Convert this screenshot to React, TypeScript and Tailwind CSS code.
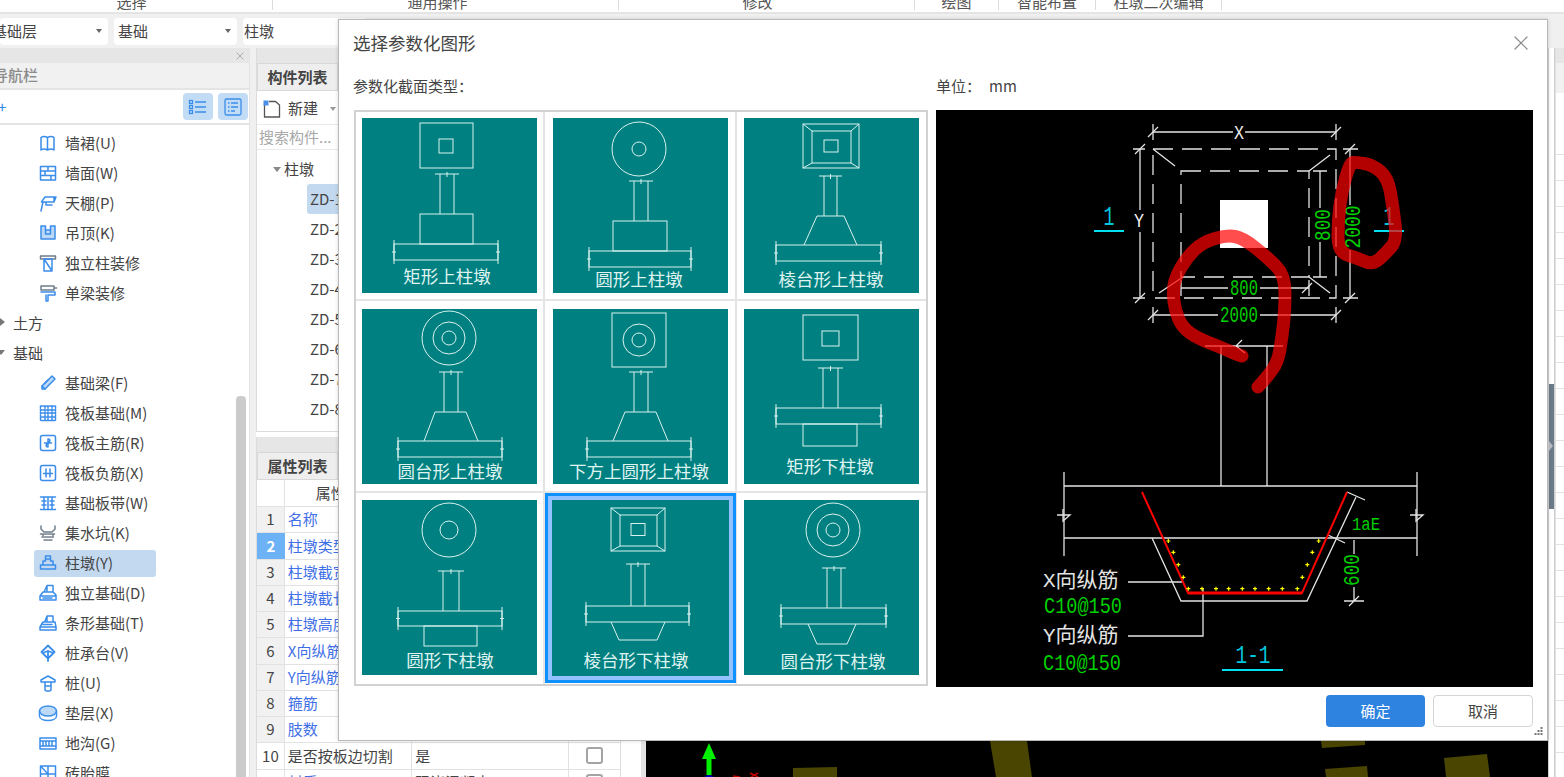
import React from "react";
import { X } from "lucide-react";

type Pt = [number, number];

// ---------- teal section tiles ----------
const L = ({ a, b, c, d }: { a: number; b: number; c: number; d: number }) => (
  <line x1={a} y1={b} x2={c} y2={d} />
);

const Sq = ({ a, b, c, d }: { a: number; b: number; c: number; d: number }) => (
  <rect x={a} y={b} width={c - a} height={d - b} />
);

const Plate = ({ x1, x2, y1, y2 }: { x1: number; x2: number; y1: number; y2: number }) => (
  <g>
    <rect x={x1} y={y1} width={x2 - x1} height={y2 - y1} />
    <L a={x1} b={y1 - 4} c={x1} d={y2 + 4} />
    <L a={x2} b={y1 - 4} c={x2} d={y2 + 4} />
    <L a={x1 - 2} b={(y1 + y2) / 2} c={x1 + 2} d={(y1 + y2) / 2} />
    <L a={x2 - 2} b={(y1 + y2) / 2} c={x2 + 2} d={(y1 + y2) / 2} />
  </g>
);

const Column = ({ x1, x2, y1, y2 }: { x1: number; x2: number; y1: number; y2: number }) => (
  <g>
    <L a={x1} b={y1} c={x1} d={y2} />
    <L a={x2} b={y1} c={x2} d={y2} />
    <L a={x1 - 5} b={y1} c={x2 + 5} d={y1} />
    <L a={(x1 + x2) / 2} b={y1 - 2} c={(x1 + x2) / 2} d={y1 + 3} />
  </g>
);

const Frustum = ({ x1, x2, y1, y2, i }: { x1: number; x2: number; y1: number; y2: number; i: number }) => (
  <g>
    <Sq a={x1} b={y1} c={x2} d={y2} />
    <Sq a={x1 + 9} b={y1 + 7} c={x2 - 8} d={y2 - 5} />
    <Sq a={(x1 + x2) / 2 - i} b={(y1 + y2) / 2 - i + 1} c={(x1 + x2) / 2 + i} d={(y1 + y2) / 2 + i - 1} />
    <L a={x1} b={y1} c={x1 + 9} d={y1 + 7} />
    <L a={x2} b={y1} c={x2 - 8} d={y1 + 7} />
    <L a={x1} b={y2} c={x1 + 9} d={y2 - 5} />
    <L a={x2} b={y2} c={x2 - 8} d={y2 - 5} />
  </g>
);

const Circles = ({ cx, cy, rs }: { cx: number; cy: number; rs: number[] }) => (
  <g>
    {rs.map((r) => (
      <circle key={r} cx={cx} cy={cy} r={r} />
    ))}
  </g>
);

const Trap = ({ a, b, c, d, y1, y2 }: { a: number; b: number; c: number; d: number; y1: number; y2: number }) => (
  <polyline points={`${a},${y2} ${b},${y1} ${c},${y1} ${d},${y2}`} />
);

const tiles: { label: string; lx: number; ly: number; draw: React.ReactNode }[] = [
  {
    label: "矩形上柱墩", lx: 85, ly: 159,
    draw: (
      <>
        <Sq a={58} b={5} c={111} d={50} />
        <Sq a={77} b={21} c={91} d={35} />
        <Column x1={78} x2={92} y1={56} y2={96} />
        <Sq a={58} b={96} c={111} d={126} />
        <Plate x1={32} x2={136} y1={126} y2={142} />
      </>
    ),
  },
  {
    label: "圆形上柱墩", lx: 86, ly: 162,
    draw: (
      <>
        <Circles cx={86} cy={31} rs={[27, 7]} />
        <Column x1={81} x2={95} y1={63} y2={103} />
        <Sq a={60} b={103} c={114} d={133} />
        <Plate x1={36} x2={138} y1={133} y2={149} />
      </>
    ),
  },
  {
    label: "棱台形上柱墩", lx: 87, ly: 162,
    draw: (
      <>
        <Frustum x1={59} x2={115} y1={6} y2={50} i={7} />
        <Column x1={80} x2={93} y1={58} y2={98} />
        <Trap a={60} b={73} c={100} d={113} y1={98} y2={127} />
        <Plate x1={32} x2={137} y1={127} y2={143} />
      </>
    ),
  },
  {
    label: "圆台形上柱墩", lx: 88, ly: 163,
    draw: (
      <>
        <Circles cx={87} cy={29} rs={[27, 16, 7]} />
        <Column x1={82} x2={96} y1={63} y2={103} />
        <Trap a={62} b={73} c={104} d={116} y1={103} y2={132} />
        <Plate x1={36} x2={140} y1={132} y2={148} />
      </>
    ),
  },
  {
    label: "下方上圆形上柱墩", lx: 86, ly: 163,
    draw: (
      <>
        <Sq a={59} b={4} c={113} d={58} />
        <Circles cx={86} cy={31} rs={[16, 7]} />
        <Column x1={81} x2={95} y1={63} y2={103} />
        <Trap a={60} b={72} c={103} d={115} y1={103} y2={132} />
        <Plate x1={34} x2={138} y1={132} y2={148} />
      </>
    ),
  },
  {
    label: "矩形下柱墩", lx: 86, ly: 158,
    draw: (
      <>
        <Sq a={59} b={6} c={114} d={51} />
        <Sq a={78} b={22} c={95} d={37} />
        <Column x1={79} x2={94} y1={59} y2={99} />
        <Plate x1={32} x2={137} y1={99} y2={115} />
        <Sq a={59} b={115} c={113} d={137} />
      </>
    ),
  },
  {
    label: "圆形下柱墩", lx: 88, ly: 161,
    draw: (
      <>
        <Circles cx={87} cy={30} rs={[27, 9]} />
        <Column x1={81} x2={97} y1={71} y2={111} />
        <Plate x1={36} x2={140} y1={111} y2={126} />
        <Sq a={62} b={126} c={115} d={146} />
      </>
    ),
  },
  {
    label: "棱台形下柱墩", lx: 83, ly: 161,
    draw: (
      <>
        <Frustum x1={58} x2={112} y1={8} y2={51} i={7} />
        <Column x1={78} x2={92} y1={64} y2={106} />
        <Plate x1={33} x2={136} y1={106} y2={122} />
        <Trap a={58} b={66} c={104} d={112} y1={140} y2={122} />
      </>
    ),
  },
  {
    label: "圆台形下柱墩", lx: 89, ly: 162,
    draw: (
      <>
        <Circles cx={89} cy={30} rs={[27, 16, 7]} />
        <Column x1={83} x2={97} y1={68} y2={108} />
        <Plate x1={37} x2={142} y1={108} y2={124} />
        <Trap a={64} b={73} c={103} d={112} y1={144} y2={124} />
      </>
    ),
  },
];

const colPad = ["pl-[6px]", "pl-[8px]", "pl-[7px]"];
const rowPad = ["pt-[6px]", "pt-[8px]", "pt-[7px]"];

const Tile = ({ label, lx, ly, draw }: { label: string; lx: number; ly: number; draw: React.ReactNode }) => (
  <svg viewBox="0 0 175 175" className="relative block h-[175px] w-[175px] bg-[#008080]">
    <g fill="none" stroke="#d9f2ef" strokeWidth="1">
      {draw}
    </g>
    <text x={lx} y={ly + 6} textAnchor="middle" fontSize="17.5" fill="#dff3f0">
      {label}
    </text>
  </svg>
);

// ---------- black preview ----------
const smooth = (p: Pt[], closed = false) => {
  const pts = closed ? [...p, p[0]] : p;
  let d = closed
    ? `M${(p[0][0] + p[p.length - 1][0]) / 2} ${(p[0][1] + p[p.length - 1][1]) / 2}`
    : `M${p[0][0]} ${p[0][1]}`;
  for (let i = 0; i < pts.length - 1; i++) {
    const mx = (pts[i][0] + pts[i + 1][0]) / 2;
    const my = (pts[i][1] + pts[i + 1][1]) / 2;
    d += ` Q${pts[i][0]} ${pts[i][1]} ${mx} ${my}`;
  }
  if (!closed) d += ` L${pts[pts.length - 1][0]} ${pts[pts.length - 1][1]}`;
  return d;
};

const ink1: Pt[] = [
  [1242, 356], [1236, 354], [1220, 347], [1197, 338], [1182, 327], [1175, 310], [1173, 293], [1175, 278],
  [1187, 257], [1203, 242], [1227, 235], [1243, 238], [1267, 257], [1285, 275], [1285, 310], [1282, 337],
  [1278, 362], [1267, 377], [1258, 387],
];
const ink2: Pt[] = [
  [1355, 162], [1373, 165], [1388, 178], [1393, 207], [1397, 240], [1387, 252], [1373, 265], [1357, 258],
  [1338, 252], [1338, 220], [1342, 190], [1350, 163],
];

const rebarDots: Pt[] = [
  [445, 423], [460, 457], [475, 494], [490, 532], [505, 566], [546, 566], [588, 566], [626, 566], [667, 566],
  [705, 566], [746, 566], [787, 566], [832, 566], [847, 532], [862, 494], [877, 457], [896, 423],
];

const DimTick = ({ x, y }: { x: number; y: number }) => <path d={`M${x - 5} ${y + 5} L${x + 5} ${y - 5}`} />;

const Preview = () => (
  <svg viewBox="936 110 597 577" className="block h-[577px] w-[597px] bg-black">
    <g fill="none" stroke="#e4e4e4" strokeWidth="1.3">
      {/* top dims */}
      <path d="M1153 132 H1233 M1245 132 H1336 M1153 124 V140 M1336 124 V140" />
      <DimTick x={1153} y={132} />
      <DimTick x={1336} y={132} />
      <path d="M1140 149 V210 M1140 232 V298 M1133 149 H1145 M1133 298 H1145" />
      <DimTick x={1140} y={149} />
      <DimTick x={1140} y={298} />
      {/* plan */}
      <rect x="1153" y="149" width="183" height="149" strokeDasharray="20 9" />
      <rect x="1181" y="171" width="128" height="106" strokeDasharray="20 9" />
      <path d="M1153 149 L1175 166 M1330 155 L1309 171 M1159 293 L1183 277 M1309 277 L1330 293" />
      <path d="M1320 171 V208 M1320 242 V277 M1313 171 H1327 M1313 277 H1327" />
      <path d="M1350 149 V205 M1350 250 V298 M1343 149 H1358 M1343 298 H1358" />
      <DimTick x={1350} y={149} />
      <DimTick x={1350} y={298} />
      <path d="M1181 288 H1228 M1260 288 H1309 M1181 280 V296 M1309 280 V296" />
      <DimTick x={1307} y={288} />
      <path d="M1153 315 H1218 M1260 315 H1336 M1153 307 V323 M1336 307 V323" />
      <DimTick x={1153} y={315} />
      <DimTick x={1336} y={315} />
      {/* column */}
      <path d="M1205 346 H1283 M1221 346 V486 M1267 346 V486 M1236 346 L1242 340 M1236 346 L1245 353" />
      {/* section */}
      <path d="M1064 486 H1417 M1064 538 H1417 M1064 472 V556 M1417 472 V556" />
      <path d="M1057 515 L1070 515 L1063 521 V509 M1410 515 L1423 515 L1416 521 V509" />
      <polyline points="1152,538 1181,601 1307,601 1356,497" />
      <path d="M1347 492 L1365 500 M1328 535 L1345 543 M1354 540 V554 M1354 587 V601 M1344 601 H1364 M1349 606 L1359 596" />
      <path d="M1128 582 H1182 M1128 636 H1203 V589" />
    </g>
    <rect x="1220" y="200" width="48" height="48" fill="#fff" />
    <polyline points="1142,492 1188,593 1302,593 1347,492" fill="none" stroke="#f00" strokeWidth="2" />
    <path d="M1188 593 H1302" stroke="#f00" strokeWidth="3" />
    {rebarDots.map(([x, y]) => (
      <path
        key={`${x}-${y}`}
        d={`M${1020 + x / 3 - 2} ${400 + y / 3} h4 M${1020 + x / 3} ${400 + y / 3 - 2} v4`}
        stroke="#ff0"
        strokeWidth="1.2"
      />
    ))}
    <path d="M1094 231 H1124 M1374 231 H1404 M1222 670 H1283" stroke="#00e0ee" strokeWidth="2" />
    <g className="font-['Liberation_Mono']">
      <text x="1239" y="139" textAnchor="middle" fontSize="21" textLength="10" lengthAdjust="spacingAndGlyphs" fill="#eee">X</text>
      <text x="1139" y="227" textAnchor="middle" fontSize="21" textLength="10" lengthAdjust="spacingAndGlyphs" fill="#eee">Y</text>
      <text x="1109" y="225" textAnchor="middle" fontSize="27" textLength="11" lengthAdjust="spacingAndGlyphs" fill="#00c4dc">1</text>
      <text x="1389" y="225" textAnchor="middle" fontSize="27" textLength="11" lengthAdjust="spacingAndGlyphs" fill="#00c4dc">1</text>
      <g fill="#00d000" fontSize="22">
        <text x="1244" y="295" textAnchor="middle" textLength="28" lengthAdjust="spacingAndGlyphs">800</text>
        <text x="1239" y="322" textAnchor="middle" textLength="38" lengthAdjust="spacingAndGlyphs">2000</text>
        <text x="1330" y="225" textAnchor="middle" textLength="32" lengthAdjust="spacingAndGlyphs" transform="rotate(-90 1330 225)">800</text>
        <text x="1360" y="227" textAnchor="middle" textLength="43" lengthAdjust="spacingAndGlyphs" transform="rotate(-90 1360 227)">2000</text>
        <text x="1359" y="570" textAnchor="middle" textLength="32" lengthAdjust="spacingAndGlyphs" transform="rotate(-90 1359 570)">600</text>
        <text x="1044" y="613" textLength="78" lengthAdjust="spacingAndGlyphs">C10@150</text>
        <text x="1043" y="670" textLength="78" lengthAdjust="spacingAndGlyphs">C10@150</text>
      </g>
      <text x="1352" y="530" fontSize="18" textLength="28" lengthAdjust="spacingAndGlyphs" fill="#00d000">1aE</text>
      <text x="1253" y="663" textAnchor="middle" fontSize="25" textLength="35" lengthAdjust="spacingAndGlyphs" fill="#00c4dc">1-1</text>
      <text x="1043" y="587" fontSize="21" fill="#e4e4e4">X<tspan className="font-['Noto_Sans_CJK_SC']">向纵筋</tspan></text>
      <text x="1043" y="642" fontSize="21" fill="#e4e4e4">Y<tspan className="font-['Noto_Sans_CJK_SC']">向纵筋</tspan></text>
    </g>
    <g fill="none" stroke="#ff0000" strokeOpacity="0.7" strokeWidth="13" strokeLinecap="round" strokeLinejoin="round">
      <path d={smooth(ink1)} />
      <path d={smooth(ink2, true)} />
    </g>
  </svg>
);

// ---------- nav icons ----------
const B = "#3a8dea";
const G = "#6f7d8c";
const Ico = ({ children }: { children: React.ReactNode }) => (
  <svg viewBox="0 0 20 20" className="h-5 w-5 shrink-0" fill="none" stroke={B} strokeWidth="1.5" strokeLinejoin="round" strokeLinecap="round">
    {children}
  </svg>
);

const icons: Record<string, React.ReactNode> = {
  wallskirt: <path d="M3 4.5 C5 3 7 3 9.5 4.5 V17 C7 15.5 5 15.5 3 17 Z M9.5 4.5 C12 3 14 3 16 4.5 V17 C14 15.5 12 15.5 9.5 17" />,
  wallface: <path d="M2.5 3.5 H17.5 V17 H2.5 Z M2.5 8 H17.5 M2.5 12.5 H17.5 M10 3.5 V8 M7 8 V12.5 M13 12.5 V17" />,
  ceiling: <path d="M7 4 H18 L16 9 H3.5 Z M5 9 L3 18 M16 4 V9 M8 9 V12 H14" />,
  drop: <><path d="M3 3 H7.5 V7 H12.5 V3 H17 V16 H3 Z" fill="#bcd9f7" /><path d="M7.5 7 V11 H12.5 V7" /></>,
  pillardeco: <><path d="M2.5 3 H17.5 V6 H2.5 Z" stroke={G} /><path d="M6 6 H14 V18 H6 Z M6 6 L14 18" /></>,
  beamdeco: <><path d="M3 3 H16 V7 H3 Z M16 5 H18.5" stroke={G} /><path d="M3 9 H17 V12 H10 V18 H8 V12" /></>,
  beam: <><path d="M4 13 L14 3 L17 6 L7 16 H4 Z" fill="#bcd9f7" /><path d="M4 13 L7 16 M6 11 L10 7" /></>,
  raft: <path d="M2.5 3 H17.5 V17.5 H2.5 Z M2.5 7 H17.5 M2.5 10 H17.5 M2.5 14 H17.5 M7 3 V17.5 M10 3 V17.5 M14 3 V17.5" strokeDasharray="2 1" />,
  raftmain: <><rect x="2.5" y="2.5" width="15" height="15" rx="2" /><path d="M10 6 V14 M6.5 10 H13.5 M10 6 C12.5 6 12.5 9 10 9 M10 14 C7.5 14 7.5 11 10 11" /></>,
  raftneg: <><rect x="2.5" y="2.5" width="15" height="15" rx="2" /><path d="M8 6 V14 M12 6 V14 M5.5 10.5 H14.5" /></>,
  strip: <path d="M2.5 4 H17.5 M2.5 16.5 H17.5 M6 4 V16.5 M10 4 V16.5 M14 4 V16.5 M4 8 H8 M4 12 H8 M12 8 H16 M12 12 H16" />,
  sump: <><path d="M3 3 V6 L6 9 H14 L17 6 V3" stroke={G} /><path d="M2.5 11 H17.5 M4 14 H16 M6 17 H14 M5 11 V14 M15 11 V14" stroke={G} strokeDasharray="1.5 1" /></>,
  pier: <path d="M7.5 3 H12.5 V8 H15 V12 H5 V8 H7.5 Z M2.5 12 H17.5 V16 H2.5 Z M7.5 6 H12.5" />,
  isolated: <path d="M9 2.5 H15 L15 9 L18 12 V17 H2 V13 L5 9 L9 9 Z M2 13 H18 M9 2.5 L6.5 8 M15 9 H9 M5 15 H14" />,
  strip2: <path d="M9 3 H15 V9 H17 L18 14 V17 H2 V14 L5 9 H9 Z M2 14 H18 M9 3 L7 8 M9 9 H15 M5 11.5 H14" />,
  cap: <path d="M10 2.5 L16.5 9 L10 15.5 L3.5 9 Z M10 8 L6 9.5 M10 8 L14 9.5 M10 8 V18" strokeWidth="1.8" />,
  pile: <><path d="M3 7 L10 3 L17 7 V9 H3 Z" /><path d="M7 9 V17 C8 18.5 12 18.5 13 17 V9 M7 13 H13" /></>,
  cushion: <><ellipse cx="10" cy="8" rx="8.5" ry="5" fill="#bcd9f7" /><path d="M1.5 8 V13 C1.5 19 18.5 19 18.5 13 V8" /></>,
  trench: <path d="M2 5 H18 V16 H2 Z M2 8 H18 M5 8 V13 M8 8 V13 M11 8 V13 M14 8 V13 M2 13 H18" />,
  brick: <path d="M2.5 3 H17.5 V19 H2.5 Z M2.5 11 H17.5 M10 3 V19 M2.5 3 L10 11" />,
};

const navRows: { key?: string; label: string; group?: "open" | "closed"; active?: boolean }[] = [
  { key: "wallskirt", label: "墙裙(U)" },
  { key: "wallface", label: "墙面(W)" },
  { key: "ceiling", label: "天棚(P)" },
  { key: "drop", label: "吊顶(K)" },
  { key: "pillardeco", label: "独立柱装修" },
  { key: "beamdeco", label: "单梁装修" },
  { label: "土方", group: "closed" },
  { label: "基础", group: "open" },
  { key: "beam", label: "基础梁(F)" },
  { key: "raft", label: "筏板基础(M)" },
  { key: "raftmain", label: "筏板主筋(R)" },
  { key: "raftneg", label: "筏板负筋(X)" },
  { key: "strip", label: "基础板带(W)" },
  { key: "sump", label: "集水坑(K)" },
  { key: "pier", label: "柱墩(Y)", active: true },
  { key: "isolated", label: "独立基础(D)" },
  { key: "strip2", label: "条形基础(T)" },
  { key: "cap", label: "桩承台(V)" },
  { key: "pile", label: "桩(U)" },
  { key: "cushion", label: "垫层(X)" },
  { key: "trench", label: "地沟(G)" },
  { key: "brick", label: "砖胎膜" },
];

const NavPanel = () => (
  <aside className="relative flex h-full w-[250px] shrink-0 flex-col overflow-hidden border-r border-[#e4e4e4] bg-white">
    <div className="flex h-[15px] shrink-0 items-center justify-end bg-[#e6e6e6] pr-[3px]">
      <X size={12} strokeWidth={1.5} className="text-[#9a9a9a]" />
    </div>
    <div className="flex h-[27px] shrink-0 items-center border-b-2 border-[#e4e4e4] bg-[#f1f1f1]">
      <span className="-ml-[7px] text-[15px] font-medium text-[#8a8a8a]">导航栏</span>
    </div>
    <div className="flex h-[35px] shrink-0 items-center justify-between border-b-2 border-[#e4e4e4] pr-[1px]">
      <span className="-ml-[2px] text-[15px] leading-none text-[#2f88e8]">+</span>
      <div className="flex gap-[5px]">
        <div className="flex h-[27px] w-[30px] items-center justify-center rounded-[4px] bg-[#c2dcf5]">
          <svg viewBox="0 0 20 16" className="h-4 w-5" fill="none" stroke={B} strokeWidth="1.3">
            <path d="M7 3 H18 M7 8 H18 M7 13 H18" />
            <rect x="1.5" y="1.5" width="3" height="3" />
            <rect x="1.5" y="6.5" width="3" height="3" />
            <rect x="1.5" y="11.5" width="3" height="3" />
          </svg>
        </div>
        <div className="flex h-[27px] w-[30px] items-center justify-center rounded-[4px] bg-[#c2dcf5]">
          <svg viewBox="0 0 20 20" className="h-5 w-5" fill="none" stroke={B} strokeWidth="1.3">
            <rect x="2" y="2" width="16" height="16" rx="1.5" />
            <path d="M5 6 H6.5 M8 6 H15 M5 10 H6.5 M8 10 H15 M5 14 H6.5 M8 14 H12" />
          </svg>
        </div>
      </div>
    </div>
    <div className="pt-[3px]">
      {navRows.map((r) =>
        r.group ? (
          <div key={r.label} className="relative flex h-[30px] items-center pl-[13px] text-[15px] text-[#444]">
            <span
              className={
                r.group === "open"
                  ? "absolute -left-[3px] top-[12px] border-x-[4px] border-t-[5px] border-x-transparent border-t-[#777]"
                  : "absolute left-0 top-[10px] border-y-[4px] border-l-[5px] border-y-transparent border-l-[#777]"
              }
            />
            {r.label}
          </div>
        ) : (
          <div key={r.label} className="flex h-[30px] items-center pl-[34px]">
            <div
              className={
                r.active
                  ? "flex h-[27px] w-[122px] items-center gap-[7px] rounded-[3px] bg-[#c2d9f0] pl-[4px] text-[15px] text-[#444]"
                  : "flex h-[27px] w-[122px] items-center gap-[7px] whitespace-nowrap pl-[4px] text-[15px] text-[#444]"
              }
            >
              <Ico>{icons[r.key as string]}</Ico>
              {r.label}
            </div>
          </div>
        )
      )}
    </div>
    <div className="absolute bottom-0 left-[236px] top-[348px] w-[10px] rounded-t-[4px] bg-[#cbcbcb]" />
  </aside>
);

const zdRows = ["ZD-1", "ZD-2", "ZD-3", "ZD-4", "ZD-5", "ZD-6", "ZD-7", "ZD-8"];

const propRows: { n: number; name: string; val?: string; link: boolean; check?: boolean }[] = [
  { n: 1, name: "名称", link: true },
  { n: 2, name: "柱墩类型", link: true },
  { n: 3, name: "柱墩截宽", link: true },
  { n: 4, name: "柱墩截长", link: true },
  { n: 5, name: "柱墩高度", link: true },
  { n: 6, name: "X向纵筋", link: true },
  { n: 7, name: "Y向纵筋", link: true },
  { n: 8, name: "箍筋", link: true },
  { n: 9, name: "肢数", link: true },
  { n: 10, name: "是否按板边切割", val: "是", link: false, check: true },
  { n: 11, name: "材质", val: "现浇混凝土", link: true, check: true },
];

const MiddlePanels = () => (
  <div className="flex h-full w-[365px] shrink-0 flex-col gap-[5px]">
    <section className="flex h-[384px] shrink-0 flex-col border-x border-b border-[#dcdcdc] bg-white">
      <div className="h-[15px] shrink-0 bg-[#e6e6e6]" />
      <div className="flex h-[28px] shrink-0 bg-[#f4f4f4]">
        <div className="flex w-[81px] items-center justify-center border border-[#d8d8d8] bg-[#eeeeee] text-[15px] font-bold text-[#444]">
          构件列表
        </div>
      </div>
      <div className="flex h-[34px] shrink-0 items-center gap-[6px] border-b border-[#eaeaea] pl-[5px] pt-[2px] text-[15px] text-[#444]">
        <svg viewBox="0 0 20 20" className="h-5 w-5" fill="none" stroke="#555" strokeWidth="1.3">
          <path d="M2.5 5 V18 H17.5 V6 L13.5 2.5 H7" />
          <rect x="1.5" y="1.5" width="5" height="5" fill="#4a90e8" stroke="none" />
        </svg>
        新建
        <span className="ml-[6px] border-x-[3px] border-t-[4px] border-x-transparent border-t-[#999]" />
      </div>
      <div className="flex h-[25px] shrink-0 items-center whitespace-nowrap border-b border-[#eaeaea] pl-[2px] text-[15px] text-[#a8a8a8]">
        搜索构件...
      </div>
      <div className="pl-[16px] pt-[4px]">
        <div className="flex h-[30px] items-center gap-[3px] text-[15px] text-[#444]">
          <span className="border-x-[4px] border-t-[5px] border-x-transparent border-t-[#888]" />
          柱墩
        </div>
        {zdRows.map((z, i) => (
          <div
            key={z}
            className={
              i === 0
                ? "ml-[34px] flex h-[30px] items-center rounded-[3px] bg-[#c2d9f0] pl-[3px] text-[15px] text-[#444]"
                : "ml-[34px] flex h-[30px] items-center pl-[3px] text-[15px] text-[#444]"
            }
          >
            {z}
          </div>
        ))}
      </div>
    </section>
    <section className="flex min-h-0 flex-1 flex-col border-x border-[#dcdcdc] bg-white">
      <div className="h-[15px] shrink-0 bg-[#e6e6e6]" />
      <div className="flex h-[28px] shrink-0 bg-[#f4f4f4]">
        <div className="flex w-[81px] items-center justify-center border border-[#d8d8d8] bg-[#eeeeee] text-[15px] font-bold text-[#444]">
          属性列表
        </div>
      </div>
      <div className="flex h-[27px] shrink-0 border-b border-[#e2e2e2] text-[15px] text-[#444]">
        <div className="w-[28px] border-r border-[#e2e2e2]" />
        <div className="flex w-[128px] items-center whitespace-nowrap border-r border-[#e2e2e2] pl-[31px]">属性名称</div>
        <div className="flex w-[158px] items-center justify-center border-r border-[#e2e2e2]">属性值</div>
        <div className="flex w-[51px] items-center justify-center">附加</div>
      </div>
      {propRows.map((r) => (
        <div key={r.n} className="flex h-[26.25px] shrink-0 border-b border-[#e2e2e2] text-[15px]">
          <div
            className={
              r.n === 2
                ? "flex w-[28px] items-center justify-center bg-[#6cb2f5] font-bold text-white"
                : r.n >= 10
                  ? "flex w-[28px] items-center justify-center border-r border-[#e2e2e2] text-[#444]"
                  : "flex w-[28px] items-center justify-center border-r border-[#e2e2e2] bg-[#f1f1f1] text-[#444]"
            }
          >
            {r.n}
          </div>
          <div
            className={
              r.link
                ? "flex w-[128px] items-center whitespace-nowrap border-r border-[#e2e2e2] pl-[3px] text-[#3f6fe6]"
                : "flex w-[128px] items-center whitespace-nowrap border-r border-[#e2e2e2] pl-[3px] text-[#444]"
            }
          >
            {r.name}
          </div>
          <div className="flex w-[158px] items-center border-r border-[#e2e2e2] pl-[3px] text-[#444]">{r.val}</div>
          <div className="flex w-[51px] items-center justify-center">
            {r.check && <span className="h-[17px] w-[17px] rounded-[3px] border-2 border-[#a4a4a4] bg-white" />}
          </div>
        </div>
      ))}
    </section>
  </div>
);

const Canvas = () => (
  <svg viewBox="646 48 902 729" className="block h-full min-w-0 flex-1 bg-black">
    <g fill="#4a4500">
      <polygon points="793,768 837,767 837,777 793,777" />
      <polygon points="990,741 1027,741 1032,777 996,777" />
      <polygon points="1322,748 1321,741 1365,741 1365,745" />
      <polygon points="1325,769 1367,766 1368,777 1326,777" />
      <polygon points="1444,758 1487,754 1490,777 1446,777" />
    </g>
    <path d="M709 743 L716 759 H711.5 V775 H706.5 V759 H702 Z" fill="#00f000" />
    <circle cx="709" cy="781" r="6" fill="#0000c0" />
    <path d="M733 776 L740 777 M750 773 L758 777 M758 773 L751 777" stroke="#c00000" strokeWidth="1.5" />
  </svg>
);

const RightStrip = () => (
  <div className="flex h-full w-[16px] shrink-0 bg-white">
    <div className="flex w-[7px] shrink-0 flex-col border-x border-[#cfcfcf] bg-white pt-[336px]">
      <div className="relative h-[125px] w-[5px] bg-[#6b7a88]">
        <span className="absolute left-0 top-[57px] border-y-[5px] border-l-[4px] border-y-transparent border-l-[#b5bcc4]" />
      </div>
    </div>
    <div className="min-w-0 flex-1 border-l border-[#e0e0e0]">
      <div className="h-[15px] bg-[#e6e6e6]" />
      <div className="h-[30px] bg-[#f1f1f1]" />
      <div className="pt-[36px]">
        {Array.from({ length: 25 }, (_, i) => (
          <div key={i} className="h-[26px] border-b border-[#e2e2e2]" />
        ))}
      </div>
    </div>
  </div>
);

const ribbon = [
  { label: "选择", w: "w-[273px] pr-[9px]" },
  { label: "通用操作", w: "w-[346px] pr-[16px]" },
  { label: "修改", w: "w-[296px] pr-[18px]" },
  { label: "绘图", w: "w-[84px]" },
  { label: "智能布置", w: "w-[97px]" },
  { label: "柱墩二次编辑", w: "w-[126px]" },
];

const Select = ({ w, label, inset }: { w: string; label: string; inset: string }) => (
  <div className={`flex h-[27px] shrink-0 items-center justify-between rounded-[4px] bg-white pr-[6px] text-[15px] text-[#444] ${w}`}>
    <span className={inset}>{label}</span>
    <span className="border-x-[3px] border-t-[4px] border-x-transparent border-t-[#666]" />
  </div>
);

const Dialog = () => (
  <div className="absolute left-[338px] top-[19px] z-10 flex h-[722px] w-[1210px] flex-col border border-[#b9b9b9] bg-white pl-[15px] pr-[14px] shadow-[0_0_4px_rgba(0,0,0,0.15)]">
    <div className="flex h-[46px] shrink-0 items-center justify-between text-[17.5px] text-[#444]">
      <span className="-ml-[1px]">选择参数化图形</span>
      <X size={24} strokeWidth={1.2} className="text-[#888]" />
    </div>
    <div className="flex h-[44px] shrink-0 pt-[10px] text-[15px] leading-[20px] text-[#444]">
      <span className="-ml-[1px] w-[583px]">参数化截面类型：</span>
      <span>单位：</span>
      <span className="ml-[8px]">mm</span>
    </div>
    <div className="flex shrink-0 items-start gap-[8px]">
      <div className="grid h-[576px] w-[574px] shrink-0 grid-cols-[189px_192px_1fr] grid-rows-[189px_192px_1fr] border-2 border-[#d2d2d2]">
        {tiles.map((t, i) => (
          <div
            key={t.label}
            className={`relative ${colPad[i % 3]} ${rowPad[Math.floor(i / 3)]} ${i % 3 < 2 ? "border-r-2 border-[#e4e4e4]" : ""} ${i < 6 ? "border-b-2 border-[#e4e4e4]" : ""}`}
          >
            {i === 7 && <div className="absolute left-0 top-0 h-[190px] w-[191px] border-[3px] border-[#0f90ff] bg-[#92c2ff]" />}
            {i === 7 && <div className="absolute left-[7px] top-[7px] h-[176px] w-[177px] bg-[#008080]" />}
            <Tile {...t} />
          </div>
        ))}
      </div>
      <Preview />
    </div>
    <div className="relative flex shrink-0 justify-end gap-[8px] pt-[8px] text-[15px]">
      <button className="flex h-[32px] w-[99px] items-center justify-center rounded-[4px] bg-[#2e82e0] text-white">确定</button>
      <button className="flex h-[32px] w-[100px] items-center justify-center rounded-[4px] border border-[#d4d4d4] bg-white text-[#444]">取消</button>
      <svg viewBox="0 0 9 9" className="absolute -right-[10px] top-[40px] h-[9px] w-[9px]" fill="#777">
        <rect x="6.5" y="0" width="2" height="2" />
        <rect x="3.5" y="3" width="2" height="2" />
        <rect x="6.5" y="3" width="2" height="2" />
        <rect x="0.5" y="6" width="2" height="2" />
        <rect x="3.5" y="6" width="2" height="2" />
        <rect x="6.5" y="6" width="2" height="2" />
      </svg>
    </div>
  </div>
);

export default function App() {
  return (
    <div className="relative flex h-[777px] w-[1564px] flex-col overflow-hidden bg-white font-['Noto_Sans_CJK_SC'] text-[#444]">
      <div className="flex h-[14px] shrink-0 overflow-hidden border-b-2 border-[#e4e4e4]">
        {ribbon.map((r) => (
          <div key={r.label} className={`flex h-[10px] shrink-0 justify-center border-r border-[#dcdcdc] ${r.w}`}>
            <span className="-mt-[7px] text-[15px] leading-[18px] text-[#555]">{r.label}</span>
          </div>
        ))}
      </div>
      <div className="flex h-[34px] shrink-0 items-center gap-[6px] bg-[#f0f0f0]">
        <Select w="w-[108px]" label="基础层" inset="-ml-[8px]" />
        <Select w="w-[123px]" label="基础" inset="pl-[4px]" />
        <Select w="w-[124px]" label="柱墩" inset="pl-[1px]" />
      </div>
      <div className="flex min-h-0 flex-1">
        <NavPanel />
        <div className="w-[6px] shrink-0 bg-[#f0f0f0]" />
        <MiddlePanels />
        <div className="w-[25px] shrink-0 bg-white pl-[20px]">
          <div className="h-full w-[5px] bg-[#e4e4e4]" />
        </div>
        <Canvas />
        <RightStrip />
      </div>
      <Dialog />
    </div>
  );
}
